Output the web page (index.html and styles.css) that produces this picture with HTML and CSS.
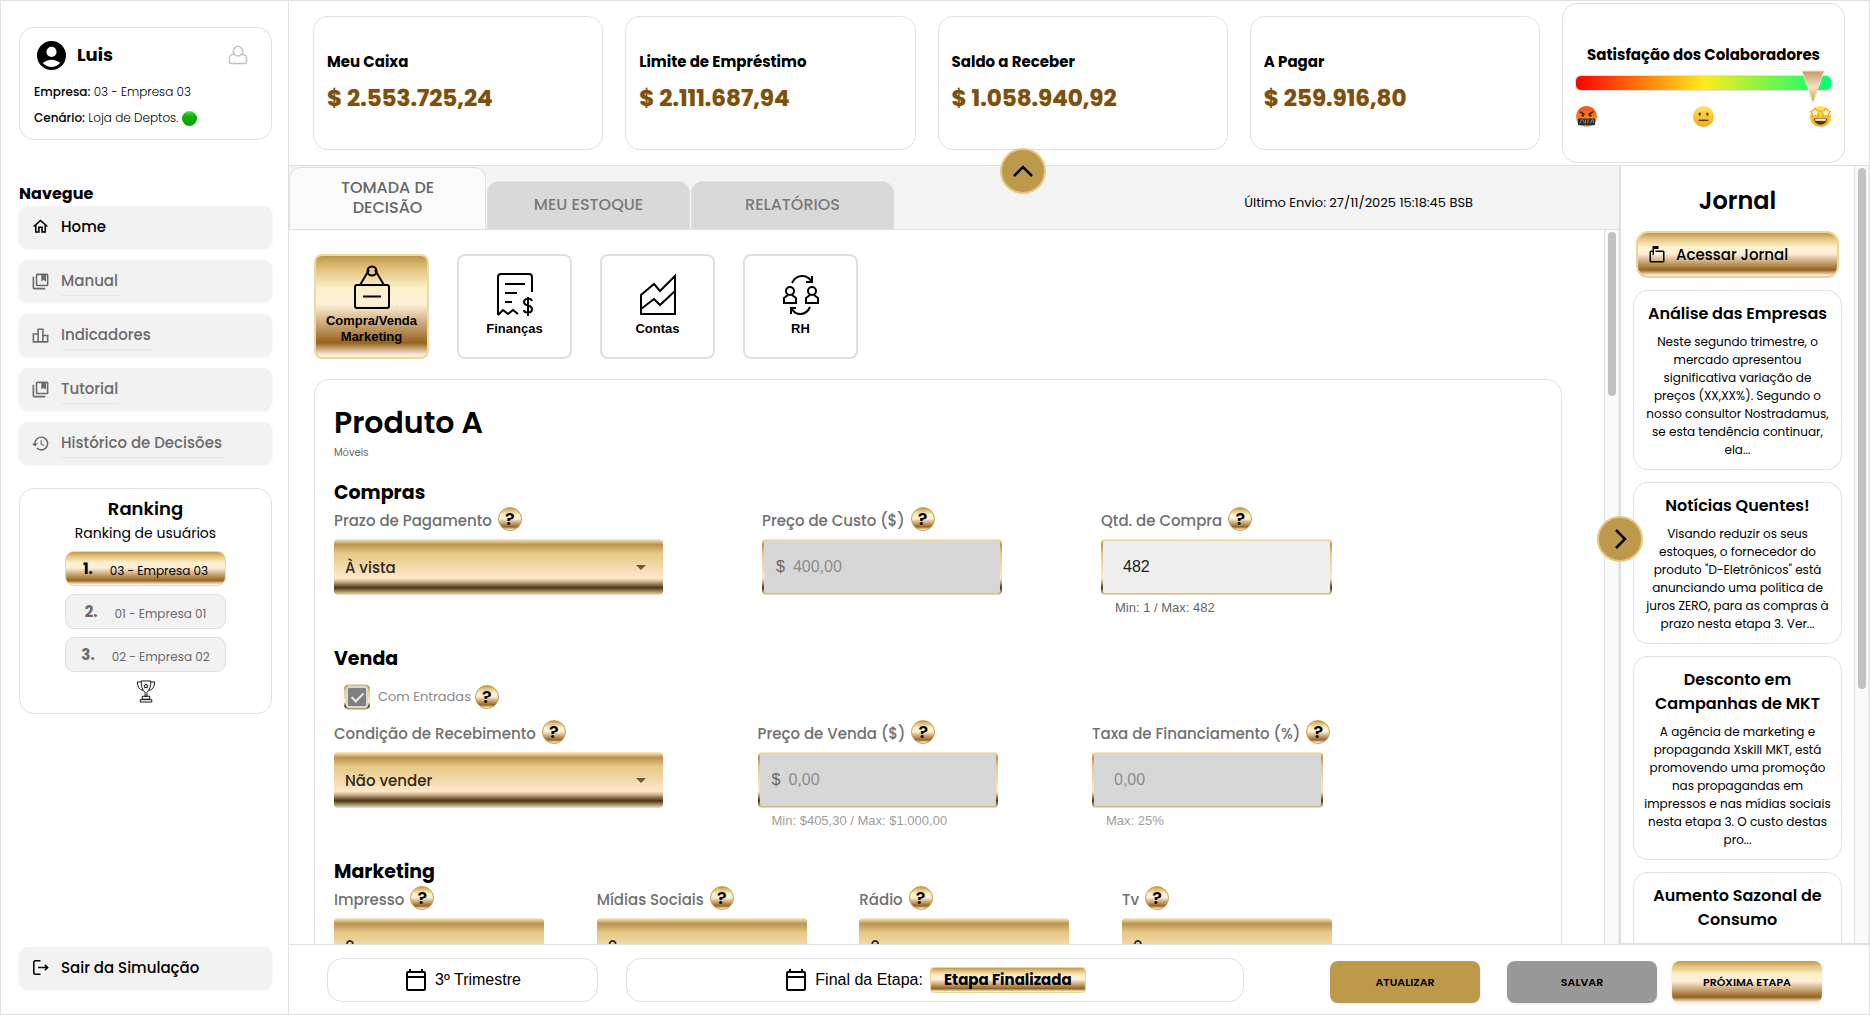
FILE: index.html
```
<!DOCTYPE html>
<html lang="pt-BR">
<head>
    <meta charset="UTF-8">
    <meta name="viewport" content="width=device-width, initial-scale=1.0">
    <title>Simulação</title>
    <link rel="stylesheet" href="styles.css">
</head>
<body>

<div class="app">

    <!-- Sidebar -->
    <aside class="sidebar">
        <div class="card user">
            <div class="user-head">
                <svg class="avatar" viewBox="2 2 20 20"><path fill-rule="evenodd" d="M12 2a10 10 0 1 0 0 20 10 10 0 0 0 0-20zm0 4a3.5 3.5 0 1 1 0 7 3.500 3.500 0 0 1 0-7zm0 14c-2 0-4.300-.8-6-2.800 1.600-1.300 3.700-2.200 6-2.200s4.400.9 6 2.200c-1.700 2-4 2.800-6 2.800z"/></svg>
                <h2>Luis</h2>
                <svg class="user-icon" viewBox="0 0 20 20"><path d="M6.500 9.500a4.500 5 0 1 1 7 0M6.500 9.500H5a3.500 3.500 0 0 0-3.500 3.500v3.500A1.500 1.500 0 0 0 3 18.500h14a1.500 1.500 0 0 0 1.500-1.500v-4A3.500 3.500 0 0 0 15 9.500h-1.500c-2 2-5 2-7 0"/></svg>
            </div>
            <p><b>Empresa:</b> 03 - Empresa 03</p>
            <p><b>Cenário:</b> Loja de Deptos. <span class="dot"></span></p>
        </div>

        <h3 class="nav-title">Navegue</h3>
        <nav class="nav">
            <a href="#" class="nav-item active">
                <svg viewBox="0 0 24 24"><path d="M12 5.700l5 4.500V18h-2v-6H9v6H7v-7.800l5-4.500M12 3L2 12h3v8h6v-6h2v6h6v-8h3L12 3z"/></svg>
                Home
            </a>
            <a href="#" class="nav-item">
                <svg viewBox="0 0 24 24"><path d="M4 6H2v14a2 2 0 0 0 2 2h14v-2H4V6zm16-4H8a2 2 0 0 0-2 2v12a2 2 0 0 0 2 2h12a2 2 0 0 0 2-2V4a2 2 0 0 0-2-2zm0 14H8V4h5v8l3-2 3 2V4h1v12z"/></svg>
                <span>Manual</span>
            </a>
            <a href="#" class="nav-item">
                <svg viewBox="0 0 24 24"><path d="M16 11V3H8v6H2v12h20V11h-6zm-6-6h4v14h-4V5zm-6 6h4v8H4v-8zm16 8h-4v-6h4v6z"/></svg>
                <span>Indicadores</span>
            </a>
            <a href="#" class="nav-item">
                <svg viewBox="0 0 24 24"><path d="M4 6H2v14a2 2 0 0 0 2 2h14v-2H4V6zm16-4H8a2 2 0 0 0-2 2v12a2 2 0 0 0 2 2h12a2 2 0 0 0 2-2V4a2 2 0 0 0-2-2zm0 14H8V4h5v8l3-2 3 2V4h1v12z"/></svg>
                <span>Tutorial</span>
            </a>
            <a href="#" class="nav-item">
                <svg viewBox="0 0 24 24"><path d="M13 3a9 9 0 0 0-9 9H1l3.900 3.900L9 12H6a7 7 0 1 1 2.100 4.900l-1.500 1.500A9 9 0 1 0 13 3zm-1 5v5l4.300 2.500.7-1.200-3.500-2.100V8H12z"/></svg>
                <span>Histórico de Decisões</span>
            </a>
        </nav>

        <div class="card ranking">
            <h3>Ranking</h3>
            <p class="ranking-sub">Ranking de usuários</p>
            <ol class="ranking-list">
                <li class="first"><b>1.</b><span>03 - Empresa 03</span></li>
                <li><b>2.</b><span>01 - Empresa 01</span></li>
                <li><b>3.</b><span>02 - Empresa 02</span></li>
            </ol>
            <svg class="trophy" viewBox="0 0 20 24"><path d="M5 1h10c0 6-1 9-4 12v4H9v-4C6 10 5 7 5 1zM5 2H1c0 5 2 8 6 9M15 2h4c0 5-2 8-6 9M6 17h8v3H6zM4 20.500h12V23H4zM10 4l.7 1.400 1.600.2-1.200 1.100.3 1.600-1.400-.8-1.400.8.300-1.600-1.200-1.100 1.600-.2z"/></svg>
        </div>

        <button class="nav-item active exit">
            <svg viewBox="0 0 24 24" class="line"><path d="M12 3.500H5.500A2 2 0 0 0 3.500 5.500v13a2 2 0 0 0 2 2H12M9 12h12M17.500 8.500L21 12l-3.500 3.500"/></svg>
            Sair da Simulação
        </button>
    </aside>

    <div class="content">

        <!-- Indicators -->
        <header class="topbar">
            <div class="card money"><h4>Meu Caixa</h4><strong>$ 2.553.725,24</strong></div>
            <div class="card money"><h4>Limite de Empréstimo</h4><strong>$ 2.111.687,94</strong></div>
            <div class="card money"><h4>Saldo a Receber</h4><strong>$ 1.058.940,92</strong></div>
            <div class="card money"><h4>A Pagar</h4><strong>$ 259.916,80</strong></div>
            <div class="card mood">
                <h4>Satisfação dos Colaboradores</h4>
                <div class="mood-bar">
                    <svg class="mood-pin" viewBox="0 0 24 34">
                        <defs><linearGradient id="pin" x1="0" y1="0" x2="0" y2="1"><stop offset="0" stop-color="#c09a6a"/><stop offset=".5" stop-color="#f5e2c4"/><stop offset="1" stop-color="#c59a45"/></linearGradient></defs>
                        <path d="M1 1h22L12 33z" fill="url(#pin)" stroke="#f3e2b4"/>
                    </svg>
                </div>
                <div class="faces">
                    <svg viewBox="0 0 24 24">
                        <defs><linearGradient id="mad" x1="0" y1="0" x2="0" y2="1"><stop offset="0" stop-color="#f0501e"/><stop offset="1" stop-color="#f7a52c"/></linearGradient></defs>
                        <circle cx="12" cy="12" r="11" fill="url(#mad)"/>
                        <path d="M5 7l5 3M19 7l-5 3" stroke="#4a1c08" stroke-width="1.500"/><circle cx="8" cy="11" r="1.300" fill="#4a1c08"/><circle cx="16" cy="11" r="1.300" fill="#4a1c08"/>
                        <rect x="3" y="14" width="18" height="7" rx="1" fill="#2c2c30"/><path d="M5 19l2-4M8 15l2 4M11 15v4M14 15l-1 4M16 19l2-4M18.500 15l1 4" stroke="#a9a9a9" stroke-width=".8"/>
                    </svg>
                    <svg viewBox="0 0 24 24">
                        <defs><linearGradient id="face" x1="0" y1="0" x2="0" y2="1"><stop offset="0" stop-color="#ffe55c"/><stop offset="1" stop-color="#f2a81d"/></linearGradient></defs>
                        <circle cx="12" cy="12" r="11" fill="url(#face)"/>
                        <ellipse cx="8" cy="9.500" rx="1.300" ry="1.800" fill="#5c3a08"/><ellipse cx="16" cy="9.500" rx="1.300" ry="1.800" fill="#5c3a08"/><path d="M7 16h10" stroke="#5c3a08" stroke-width="1.500"/>
                    </svg>
                    <svg viewBox="0 0 24 24">
                        <circle cx="12" cy="12" r="11" fill="url(#face)"/>
                        <path d="M6.500 3l1.500 3 3.500.5-2.500 2.500.5 3.500-3-1.600-3 1.600.5-3.500L1 6.500 5 6zM17.500 3L16 6l-3.500.5L15 9l-.5 3.500 3-1.600 3 1.600-.5-3.500L23 6.500 19 6z" fill="#fff3b8" stroke="#d9920c" stroke-width=".8"/>
                        <path d="M5 14h14c-.5 4-3.500 6.500-7 6.500S5.500 18 5 14z" fill="#5c3208"/><path d="M6.500 14.500h11v2h-11z" fill="#fff"/>
                    </svg>
                </div>
            </div>
        </header>

        <div class="workspace">
            <button class="round round-top" aria-label="Recolher indicadores">
                <svg viewBox="0 0 24 24"><path d="M3 17l9-9 9 9"/></svg>
            </button>

            <!-- Decision area -->
            <main class="main">
                <div class="tabs">
                    <button class="tab current">TOMADA DE<br>DECISÃO</button>
                    <button class="tab">MEU ESTOQUE</button>
                    <button class="tab">RELATÓRIOS</button>
                    <p class="last-send">Último Envio: 27/11/2025 15:18:45 BSB</p>
                </div>

                <div class="scroll-area">
                    <div class="scroll-body">
                        <div class="areas">
                            <button class="area selected">
                                <svg viewBox="0 0 36 44"><path d="M6 20L15 5M30 20L21 5"/><circle cx="18" cy="6" r="4.500"/><rect x="1" y="20" width="34" height="23" rx="2"/><path d="M9 31.500h18"/></svg>
                                Compra/Venda<br>Marketing
                            </button>
                            <button class="area">
                                <svg viewBox="0 0 36 44"><path d="M1 42V4a3 3 0 0 1 3-3h28a3 3 0 0 1 3 3v15M1 42l5-5 5 4 5-4 5 4M8 11h20M8 20h12M8 29h7M35 28c-1-3-8-3-8 1 0 5 8 2 8 7 0 5-8 4-8 1M31 24v19"/></svg>
                                Finanças
                            </button>
                            <button class="area">
                                <svg viewBox="0 0 36 44"><path d="M1 41V22l13-11 6 7L35 3v38zM1 36l13-10 6 6 15-14"/></svg>
                                Contas
                            </button>
                            <button class="area">
                                <svg viewBox="0 0 36 44"><path d="M9 10C13 1 24 1 28 8M29 3v6h-6M27 34c-4 9-14 9-18 2M8 41v-6h5"/><circle cx="7" cy="18" r="4"/><path d="M5 22l-4 3v5h12v-5l-4-3"/><circle cx="29" cy="18" r="4"/><path d="M27 22l-4 3v5h12v-5l-4-3"/></svg>
                                RH
                            </button>
                        </div>

                        <form class="card panel">
                            <h1>Produto A</h1>
                            <p class="category">Móveis</p>

                            <section>
                                <h2>Compras</h2>
                                <div class="fields">
                                    <div class="field wide">
                                        <div class="label"><label for="prazo">Prazo de Pagamento</label><button type="button" class="help">?</button></div>
                                        <select id="prazo" class="gold-select"><option>À vista</option></select>
                                    </div>
                                    <div class="field price">
                                        <div class="label"><label for="custo">Preço de Custo ($)</label><button type="button" class="help">?</button></div>
                                        <div class="input off"><span>$</span><input id="custo" type="text" value="400,00" disabled></div>
                                    </div>
                                    <div class="field amount">
                                        <div class="label"><label for="qtd">Qtd. de Compra</label><button type="button" class="help">?</button></div>
                                        <div class="input plain"><input id="qtd" type="text" value="482"></div>
                                        <p class="hint">Min: 1 / Max: 482</p>
                                    </div>
                                </div>
                            </section>

                            <section>
                                <h2>Venda</h2>
                                <div class="check">
                                    <input id="entradas" type="checkbox" checked disabled>
                                    <label for="entradas">Com Entradas</label>
                                    <button type="button" class="help">?</button>
                                </div>
                                <div class="fields">
                                    <div class="field wide">
                                        <div class="label"><label for="condicao">Condição de Recebimento</label><button type="button" class="help">?</button></div>
                                        <select id="condicao" class="gold-select"><option>Não vender</option></select>
                                    </div>
                                    <div class="field price">
                                        <div class="label"><label for="venda">Preço de Venda ($)</label><button type="button" class="help">?</button></div>
                                        <div class="input off"><span>$</span><input id="venda" type="text" value="0,00" disabled></div>
                                        <p class="hint faded">Min: $405,30 / Max: $1.000,00</p>
                                    </div>
                                    <div class="field rate">
                                        <div class="label"><label for="taxa">Taxa de Financiamento (%)</label><button type="button" class="help">?</button></div>
                                        <div class="input off plain"><input id="taxa" type="text" value="0,00" disabled></div>
                                        <p class="hint faded">Max: 25%</p>
                                    </div>
                                </div>
                            </section>

                            <section>
                                <h2>Marketing</h2>
                                <div class="fields">
                                    <div class="field media">
                                        <div class="label"><label for="impresso">Impresso</label><button type="button" class="help">?</button></div>
                                        <select id="impresso" class="gold-select"><option>0</option></select>
                                    </div>
                                    <div class="field media">
                                        <div class="label"><label for="midias">Mídias Sociais</label><button type="button" class="help">?</button></div>
                                        <select id="midias" class="gold-select"><option>0</option></select>
                                    </div>
                                    <div class="field media">
                                        <div class="label"><label for="radio">Rádio</label><button type="button" class="help">?</button></div>
                                        <select id="radio" class="gold-select"><option>0</option></select>
                                    </div>
                                    <div class="field media">
                                        <div class="label"><label for="tv">Tv</label><button type="button" class="help">?</button></div>
                                        <select id="tv" class="gold-select"><option>0</option></select>
                                    </div>
                                </div>
                            </section>
                        </form>
                    </div>
                    <div class="track"><div class="thumb"></div></div>
                </div>
            </main>

            <!-- Newspaper -->
            <aside class="news">
                <button class="round round-side" aria-label="Recolher jornal">
                    <svg viewBox="0 0 24 24"><path d="M8 3l9 9-9 9"/></svg>
                </button>
                <div class="news-body">
                    <h2>Jornal</h2>
                    <button class="open-news">
                        <svg viewBox="0 0 24 24"><path d="M20 6H10v6H8V4h6V0H6v6H4a2 2 0 0 0-2 2v12a2 2 0 0 0 2 2h16a2 2 0 0 0 2-2V8a2 2 0 0 0-2-2zm0 14H4V8h2v4h4V8h10v12z"/></svg>
                        Acessar Jornal
                    </button>
                    <article class="card">
                        <h3>Análise das Empresas</h3>
                        <p>Neste segundo trimestre, o<br>mercado apresentou<br>significativa variação de<br>preços (XX,XX%). Segundo o<br>nosso consultor Nostradamus,<br>se esta tendência continuar,<br>ela...</p>
                    </article>
                    <article class="card">
                        <h3>Notícias Quentes!</h3>
                        <p>Visando reduzir os seus<br>estoques, o fornecedor do<br>produto "D-Eletrônicos" está<br>anunciando uma política de<br>juros ZERO, para as compras à<br>prazo nesta etapa 3. Ver...</p>
                    </article>
                    <article class="card">
                        <h3>Desconto em<br>Campanhas de MKT</h3>
                        <p>A agência de marketing e<br>propaganda Xskill MKT, está<br>promovendo uma promoção<br>nas propagandas em<br>impressos e nas mídias sociais<br>nesta etapa 3. O custo destas<br>pro...</p>
                    </article>
                    <article class="card">
                        <h3>Aumento Sazonal de<br>Consumo</h3>
                    </article>
                </div>
                <div class="track"><div class="thumb long"></div></div>
            </aside>
        </div>

        <!-- Footer -->
        <footer class="footer">
            <div class="pill term">
                <svg viewBox="0 0 24 24"><path d="M20 3h-1V1h-2v2H7V1H5v2H4a2 2 0 0 0-2 2v16a2 2 0 0 0 2 2h16a2 2 0 0 0 2-2V5a2 2 0 0 0-2-2zm0 18H4V10h16v11zm0-13H4V5h16v3z"/></svg>
                3º Trimestre
            </div>
            <div class="pill stage">
                <svg viewBox="0 0 24 24"><path d="M20 3h-1V1h-2v2H7V1H5v2H4a2 2 0 0 0-2 2v16a2 2 0 0 0 2 2h16a2 2 0 0 0 2-2V5a2 2 0 0 0-2-2zm0 18H4V10h16v11zm0-13H4V5h16v3z"/></svg>
                Final da Etapa: <b>Etapa Finalizada</b>
            </div>
            <div class="actions">
                <button class="update">ATUALIZAR</button>
                <button class="save">SALVAR</button>
                <button class="next">PRÓXIMA ETAPA</button>
            </div>
        </footer>
    </div>
</div>

</body>
</html>
```
FILE: styles.css
```
:root {
    --line: #e0e0e0;
    --gold: linear-gradient(180deg, #bd994b 0%, #e3c17a 12%, #fbf1cb 32%, #ffefd9 48%, #d8bb92 62%, #96631c 86%, #ffefdb 98%);
    --gold-dark: linear-gradient(180deg, #f9edc0 0%, #bd9352 10%, #e5c985 26%, #ffe8cb 70%, #cfb48f 76%, #4a3416 87%, #f5e4b4 100%);
}

* {
    box-sizing: border-box;
}

body {
    margin: 0;
    font-family: 'Poppins', 'Inter', sans-serif;
    color: #000;
    background: #fff;
}

h1, h2, h3, h4, p {
    margin: 0;
}

button, input, select {
    font-family: inherit;
    color: inherit;
}

button {
    border: none;
    padding: 0;
    cursor: pointer;
}

.app {
    display: flex;
    height: 100vh;
    overflow: hidden;
    border: 1px solid var(--line);
}

.card {
    border: 1px solid var(--line);
    border-radius: 15px;
    background: #fff;
}

/* Sidebar */
.sidebar {
    width: 288px;
    flex-shrink: 0;
    display: flex;
    flex-direction: column;
    padding: 26px 16px 25px 18px;
    border-right: 1px solid var(--line);
}

.user {
    height: 113px;
    padding: 11px 23px 0 14px;
    font-size: 12px;
    font-weight: 300;
    line-height: 26px;
}

.user b {
    font-weight: 500;
}

.user-head {
    display: flex;
    align-items: center;
    gap: 11px;
    height: 32px;
    padding-left: 3px;
    margin-bottom: 8px;
}

.user-head h2 {
    flex: 1;
    font-size: 18px;
    font-weight: 700;
}

.avatar {
    width: 29px;
    height: 29px;
}

.user-icon {
    width: 20px;
    height: 20px;
    fill: none;
    stroke: #c4c4c4;
    stroke-width: 1.5;
}

.dot {
    display: inline-block;
    width: 15px;
    height: 15px;
    border-radius: 50%;
    vertical-align: middle;
    background: linear-gradient(180deg, #5fe05a, #06b400 35%, #0aa305);
}

.nav-title {
    margin-top: 42px;
    font-size: 16px;
    line-height: 24px;
}

.nav {
    display: flex;
    flex-direction: column;
    gap: 12px;
}

.nav-item {
    display: flex;
    align-items: center;
    gap: 11px;
    height: 42px;
    padding: 0 12px;
    border-radius: 9px;
    background: #f2f2f2;
    box-shadow: 0 1px 3px rgba(0, 0, 0, 0.08);
    color: #6b6b6b;
    font-size: 15px;
    font-weight: 500;
    text-decoration: none;
}

.nav-item svg {
    width: 19px;
    height: 19px;
    fill: currentColor;
}

.nav-item .line {
    fill: none;
    stroke: currentColor;
    stroke-width: 2;
}

.nav-item span {
    line-height: 28px;
    box-shadow: 0 1px 1px rgba(0, 0, 0, 0.04);
}

.nav-item.active {
    padding-bottom: 2px;
    color: #000;
}

.ranking {
    margin-top: 24px;
    height: 226px;
    padding-top: 7px;
    display: flex;
    flex-direction: column;
    align-items: center;
}

.ranking h3 {
    font-size: 18px;
    font-weight: 600;
    line-height: 26px;
}

.ranking-sub {
    font-size: 14px;
    line-height: 22px;
}

.ranking-list {
    list-style: none;
    margin: 7px 0 8px;
    padding: 0;
    width: 161px;
    display: flex;
    flex-direction: column;
    gap: 8px;
}

.ranking-list li {
    display: flex;
    align-items: center;
    justify-content: center;
    gap: 17px;
    height: 35px;
    border: 1px solid var(--line);
    border-radius: 9px;
    background: #f2f2f2;
    color: #6b6b6b;
    font-size: 12px;
}

.ranking-list b {
    font-size: 15px;
    line-height: 30px;
}

.ranking-list span {
    padding-top: 4px;
}

.ranking-list .first {
    border-color: #ecd8a4;
    background: var(--gold);
    color: #000;
}

.trophy {
    width: 20px;
    height: 23px;
    fill: none;
    stroke: #111;
}

.exit {
    margin-top: auto;
    flex-shrink: 0;
}

/* Top indicators */
.content {
    flex: 1;
    min-width: 0;
    display: flex;
    flex-direction: column;
}

.topbar {
    display: flex;
    align-items: center;
    gap: 22px;
    height: 165px;
    flex-shrink: 0;
    padding: 0 24px;
    border-bottom: 1px solid var(--line);
}

.money {
    flex: 290;
    height: 134px;
    padding: 0 13px 3px;
    display: flex;
    flex-direction: column;
    justify-content: center;
}

.money h4, .mood h4 {
    font-size: 15px;
    font-weight: 700;
    line-height: 22px;
}

.money strong {
    margin-top: 11px;
    font-size: 23px;
    line-height: 28px;
    color: #7b5013;
    text-shadow: 0 0 1px #d0a14a;
}

.mood {
    flex: 284;
    height: 160px;
    padding: 39px 12px 0;
    text-align: center;
}

.mood h4 {
    line-height: 24px;
    white-space: nowrap;
}

.mood-bar {
    position: relative;
    height: 16px;
    margin-top: 8px;
    border-radius: 6px;
    border: 1px solid var(--line);
    background: linear-gradient(90deg, #f00, #ffeb1b 50%, #00ff73);
}

.mood-pin {
    position: absolute;
    right: 6px;
    top: -6px;
    width: 24px;
    height: 34px;
}

.faces {
    display: flex;
    justify-content: space-between;
    margin-top: 14px;
}

.faces svg {
    width: 23px;
    height: 23px;
}

/* Workspace */
.workspace {
    position: relative;
    flex: 1;
    min-height: 0;
    display: flex;
}

.main {
    flex: 1;
    min-width: 0;
    display: flex;
    flex-direction: column;
}

.tabs {
    display: flex;
    align-items: flex-end;
    gap: 1px;
    height: 64px;
    flex-shrink: 0;
    background: #f4f4f4;
    border-bottom: 1px solid var(--line);
}

.tab {
    width: 203px;
    height: 48px;
    padding-bottom: 2px;
    border: 1px solid var(--line);
    border-bottom: none;
    border-radius: 12px 12px 0 0;
    background: #d9d9d9;
    color: #7a7a7a;
    font-size: 16px;
    font-weight: 500;
}

.tab.current {
    width: 197px;
    height: 62px;
    background: #fbfbfb;
    color: #666;
    line-height: 20px;
}

.last-send {
    margin-left: auto;
    padding-right: 146px;
    font-size: 13px;
    line-height: 52px;
}

.scroll-area {
    flex: 1;
    min-height: 0;
    display: flex;
}

.scroll-body {
    flex: 1;
    min-width: 0;
    overflow: hidden;
    padding: 24px 42px 0 25px;
}

.track {
    width: 15px;
    flex-shrink: 0;
    padding: 2px 2px 2px 3px;
    background: #fafafa;
    border-left: 1px solid var(--line);
    border-right: 1px solid #eaeaea;
}

.thumb {
    height: 164px;
    border-radius: 4px;
    background: #c1c1c1;
}

.thumb.long {
    height: 521px;
}

.areas {
    display: flex;
    gap: 28px;
}

.area {
    width: 115px;
    height: 105px;
    padding-bottom: 3px;
    display: flex;
    flex-direction: column;
    align-items: center;
    justify-content: center;
    border: 2px solid var(--line);
    border-radius: 8px;
    background: #fff;
    font-family: 'Liberation Sans', Arial, sans-serif;
    font-size: 13px;
    font-weight: bold;
    line-height: 16px;
}

.area svg {
    width: 36px;
    height: 44px;
    margin-bottom: 4px;
    fill: none;
    stroke: #000;
    stroke-width: 2;
}

.area.selected {
    border-color: #ecd9a6;
    background: var(--gold);
}

.panel {
    margin-top: 20px;
    padding: 21px 19px;
}

.panel h1 {
    font-size: 30px;
    font-weight: 600;
    line-height: 44px;
}

.category {
    font-size: 10px;
    line-height: 16px;
    color: #666;
}

.panel section {
    width: 998px;
    max-width: 100%;
    height: 166px;
}

.panel section + section {
    height: 213px;
}

.category + section {
    margin-top: 20px;
}

.panel h2 {
    font-size: 19px;
    font-weight: 700;
    line-height: 24px;
}

.fields {
    display: flex;
    justify-content: space-between;
}

.wide {
    width: 329px;
}

.price {
    width: 240px;
}

.amount, .rate .input {
    width: 231px;
}

.rate {
    width: 240px;
}

.media {
    width: 210px;
}

.label {
    display: flex;
    gap: 6px;
    height: 34px;
    padding-top: 2px;
    white-space: nowrap;
    font-size: 15px;
    font-weight: 500;
    line-height: 28px;
    color: #707070;
}

.help {
    width: 24px;
    height: 24px;
    flex-shrink: 0;
    border: 1px solid #c59f4f;
    border-radius: 50%;
    background: var(--gold);
    color: #000;
    font-size: 18px;
    font-weight: 600;
    line-height: 20px;
}

.gold-select {
    appearance: none;
    display: block;
    width: 100%;
    height: 56px;
    padding: 0 11px;
    border: none;
    border-radius: 4px;
    background: var(--gold-dark);
    color: #33291a;
    font-size: 15px;
    font-weight: 500;
}

/* arrow on the right of the drop-down */
.wide {
    position: relative;
}

.wide::after {
    content: "";
    position: absolute;
    right: 17px;
    top: 60px;
    border: 5px solid transparent;
    border-top-color: #6b5a3c;
}

.input {
    display: flex;
    align-items: center;
    gap: 8px;
    height: 56px;
    padding: 0 12px;
    border: 2px solid transparent;
    border-radius: 4px;
    background: linear-gradient(#eee, #eee) padding-box, var(--gold-dark) border-box;
    font-family: 'Liberation Sans', Arial, sans-serif;
    font-size: 16px;
}

.input.off {
    background: linear-gradient(#d7d7d7, #d7d7d7) padding-box, var(--gold-dark) border-box;
    color: #666;
}

.input.plain {
    padding-left: 20px;
}

.input input {
    width: 100%;
    min-width: 0;
    padding: 0;
    border: none;
    background: none;
    font-size: 16px;
    color: #222;
}

.input.off input {
    color: #8c8c8c;
}

.hint {
    margin-top: 3px;
    padding-left: 14px;
    font-family: 'Liberation Sans', Arial, sans-serif;
    font-size: 13px;
    line-height: 20px;
    color: #666;
}

.hint.faded {
    color: #9e9e9e;
}

.check {
    display: flex;
    align-items: center;
    gap: 4px;
    height: 26px;
    margin: 13px 0 8px;
    padding-left: 10px;
    font-size: 13px;
    color: #888;
}

.check input {
    appearance: none;
    width: 26px;
    height: 26px;
    margin: 0 4px 0 0;
    border: 2px solid transparent;
    border-radius: 5px;
    background: linear-gradient(#808080, #808080) content-box, linear-gradient(#d7d7d7, #d7d7d7) padding-box, var(--gold-dark) border-box;
    padding: 2px;
    display: grid;
    place-items: center;
}

.check input::after {
    content: "";
    width: 5px;
    height: 10px;
    border: solid #e6e6e6;
    border-width: 0 2px 2px 0;
    transform: translateY(-1px) rotate(45deg);
}

/* Round toggles */
.round {
    position: absolute;
    z-index: 2;
    width: 46px;
    height: 46px;
    border: 2px solid #e9c581;
    border-radius: 50%;
    background: #bd9a4b;
    display: grid;
    place-items: center;
}

.round svg {
    width: 24px;
    height: 24px;
    fill: none;
    stroke: #000;
    stroke-width: 2.5;
}

.round-top {
    left: 711px;
    top: -18px;
}

.round-side {
    left: -24px;
    top: 350px;
}

/* Newspaper */
.news {
    position: relative;
    width: 250px;
    flex-shrink: 0;
    display: flex;
    border-left: 2px solid var(--line);
    border-bottom: 1px solid var(--line);
}

.news-body {
    flex: 1;
    overflow: hidden;
    padding: 16px 12px 0;
    text-align: center;
}

.news h2 {
    font-size: 24px;
    font-weight: 600;
    line-height: 38px;
}

.open-news {
    display: flex;
    align-items: center;
    gap: 10px;
    width: 203px;
    height: 47px;
    margin: 11px auto 0;
    padding-left: 10px;
    border: 2px solid #ecd59b;
    border-radius: 12px;
    background: var(--gold);
    font-size: 15px;
    font-weight: 500;
}

.open-news svg {
    width: 18px;
    height: 18px;
}

.news .card {
    min-height: 162px;
    margin-top: 12px;
    padding: 11px 0 10px;
}

.news h3 {
    font-size: 16px;
    font-weight: 600;
    line-height: 24px;
}

.news .card p {
    margin-top: 7px;
    font-size: 12px;
    line-height: 18px;
    white-space: nowrap;
}

/* Footer */
.footer {
    display: flex;
    align-items: center;
    gap: 28px;
    height: 70px;
    flex-shrink: 0;
    padding: 0 47px 0 38px;
    border-top: 1px solid var(--line);
}

.pill {
    display: flex;
    align-items: center;
    justify-content: center;
    gap: 7px;
    height: 44px;
    border: 1px solid var(--line);
    border-radius: 15px;
    font-family: 'Liberation Sans', Arial, sans-serif;
    font-size: 16px;
}

.pill svg {
    width: 24px;
    height: 24px;
}

.pill b {
    padding: 0 13px;
    border: 1px solid #ecd59b;
    border-radius: 4px;
    background: var(--gold);
    font-family: 'Poppins', 'Inter', sans-serif;
    font-size: 15px;
    font-weight: 700;
    line-height: 24px;
}

.term {
    width: 271px;
}

.stage {
    width: 618px;
}

.actions {
    margin-left: auto;
    padding-top: 5px;
    display: flex;
    gap: 15px;
}

.actions button {
    width: 150px;
    height: 42px;
    border-radius: 8px;
    font-size: 11px;
    font-weight: 600;
    box-shadow: 0 1px 3px rgba(0, 0, 0, 0.1);
}

.update {
    margin-right: 12px;
    background: #bd9a4b;
}

.save {
    background: #999;
}

.actions .next {
    background: var(--gold);
}
```
